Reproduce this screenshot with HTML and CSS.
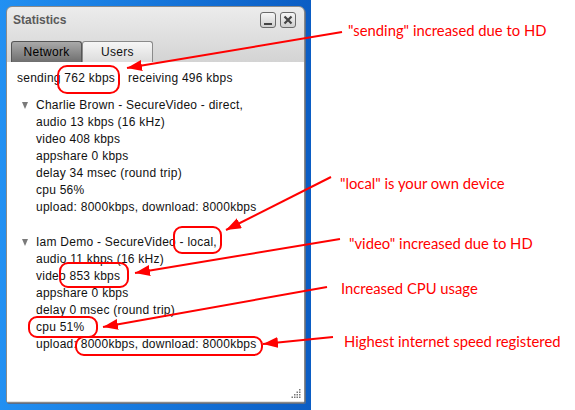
FILE: index.html
```html
<!DOCTYPE html>
<html>
<head>
<meta charset="utf-8">
<link rel="stylesheet" href="styles.css">
</head>
<body>
<div class="screen">
  <div class="desktop">
    <div class="window">
      <div class="titlebar">
        <span class="title">Statistics</span>
        <div class="controls">
          <span class="ctl"><svg width="14" height="14" viewBox="0 0 14 14"><rect x="3" y="10" width="8" height="2" fill="#444"/></svg></span>
          <span class="ctl"><svg width="14" height="14" viewBox="0 0 14 14"><path d="M3.5 3.5 L10.5 10.5 M10.5 3.5 L3.5 10.5" stroke="#444" stroke-width="2.2"/></svg></span>
        </div>
      </div>
      <div class="tabs">
        <div class="tab active">Network</div>
        <div class="tab">Users</div>
      </div>
      <div class="content">
        <div class="summary"><span>sending 762 kbps</span><span class="recv">receiving 496 kbps</span></div>
        <div class="peer">
          <div class="peer-head"><span class="tri"></span>Charlie Brown - SecureVideo - direct,</div>
          <div class="peer-lines">
            <div>audio 13 kbps (16 kHz)</div>
            <div>video 408 kbps</div>
            <div>appshare 0 kbps</div>
            <div>delay 34 msec (round trip)</div>
            <div>cpu 56%</div>
            <div>upload: 8000kbps, download: 8000kbps</div>
          </div>
        </div>
        <div class="peer second">
          <div class="peer-head"><span class="tri"></span>Iam Demo - SecureVideo - local,</div>
          <div class="peer-lines">
            <div>audio 11 kbps (16 kHz)</div>
            <div>video 853 kbps</div>
            <div>appshare 0 kbps</div>
            <div>delay 0 msec (round trip)</div>
            <div>cpu 51%</div>
            <div>upload: 8000kbps, download: 8000kbps</div>
          </div>
        </div>
        <svg class="grip" width="10" height="10" viewBox="0 0 10 10">
          <g fill="#777">
            <rect x="8" y="0" width="1.5" height="1.5"/>
            <rect x="5.5" y="2.5" width="1.5" height="1.5"/><rect x="8" y="2.5" width="1.5" height="1.5"/>
            <rect x="3" y="5" width="1.5" height="1.5"/><rect x="5.5" y="5" width="1.5" height="1.5"/><rect x="8" y="5" width="1.5" height="1.5"/>
            <rect x="0.5" y="7.5" width="1.5" height="1.5"/><rect x="3" y="7.5" width="1.5" height="1.5"/><rect x="5.5" y="7.5" width="1.5" height="1.5"/><rect x="8" y="7.5" width="1.5" height="1.5"/>
          </g>
        </svg>
      </div>
    </div>
  </div>

  <svg class="marks" width="575" height="410" viewBox="0 0 575 410">
    <defs>
      <marker id="ah" markerUnits="userSpaceOnUse" markerWidth="16" markerHeight="12" refX="15" refY="5.5" orient="auto">
        <path d="M0,0 L15,5.5 L0,11 z" fill="#f00"/>
      </marker>
    </defs>
    <g fill="none" stroke="#f00" stroke-width="2">
      <rect x="58" y="66" width="61" height="27" rx="9"/>
      <rect x="174" y="227" width="47" height="26" rx="8"/>
      <rect x="60" y="263" width="68" height="24" rx="8"/>
      <rect x="29" y="317" width="68" height="20" rx="8"/>
      <rect x="76" y="337" width="186" height="18" rx="8"/>
      <line x1="342" y1="32" x2="127" y2="68" marker-end="url(#ah)"/>
      <line x1="331" y1="177" x2="226" y2="230" marker-end="url(#ah)"/>
      <line x1="340" y1="239" x2="135" y2="273" marker-end="url(#ah)"/>
      <line x1="327" y1="287" x2="103" y2="327" marker-end="url(#ah)"/>
      <line x1="333" y1="337" x2="263" y2="344" marker-end="url(#ah)"/>
    </g>
  </svg>

  <div class="note n1">"sending" increased due to HD</div>
  <div class="note n2">"local" is your own device</div>
  <div class="note n3">"video" increased due to HD</div>
  <div class="note n4">Increased CPU usage</div>
  <div class="note n5">Highest internet speed registered</div>
</div>
</body>
</html>
```

FILE: styles.css
```css
* { box-sizing: border-box; }
html, body { margin: 0; padding: 0; background: #fff; }
.screen {
  position: relative;
  width: 575px;
  height: 410px;
  overflow: hidden;
  font-family: "Liberation Sans", Arial, sans-serif;
  font-size: 12px;
  color: #111;
}
.desktop {
  width: 311px;
  height: 410px;
  padding: 6px 6px 7px 6px;
  background: linear-gradient(to right, #2290f2, #0b5dc4);
}
.window {
  width: 299px;
  height: 397px;
  border: 1px solid #8a8a8a;
  border-radius: 6px 6px 2px 2px;
  background: linear-gradient(#ececec, #d3d3d3 56px);
  display: flex;
  flex-direction: column;
  overflow: hidden;
  box-shadow: 1px 1px 0 #5a6d88;
}
.titlebar {
  height: 34px;
  display: flex;
  align-items: flex-start;
  justify-content: space-between;
  padding: 5px 8px 0 6px;
}
.title {
  font-weight: bold;
  color: #5a5a5a;
  font-size: 12px;
  line-height: 16px;
}
.controls { display: flex; gap: 4px; }
.ctl {
  width: 16px;
  height: 16px;
  border: 1px solid #6a6a6a;
  border-radius: 3px;
  background: linear-gradient(#f6f6f6, #cfcfcf);
  display: flex;
  align-items: center;
  justify-content: center;
}
.tabs {
  display: flex;
  padding-left: 4px;
  height: 21px;
}
.tab {
  width: 71px;
  height: 21px;
  text-align: center;
  line-height: 20px;
  font-size: 12px;
  letter-spacing: 0.3px;
  color: #111;
  border: 1px solid #8a8a8a;
  border-bottom: none;
  border-radius: 3px 3px 0 0;
  background: linear-gradient(#f6f6f6, #dcdcdc);
}
.tab.active {
  background: linear-gradient(#a9a9a9, #6f6f6f);
  border-color: #555;
  color: #000;
}
.content {
  position: relative;
  flex: 1;
  background: #fff;
  padding: 8px 10px 0 10px;
  line-height: 17px;
  letter-spacing: 0.25px;
  border-bottom: 1px solid #e4e4e4;
}
.summary { display: flex; }
.recv { margin-left: 13px; }
.peer { margin-top: 10px; }
.peer.second { margin-top: 18px; }
.peer-head { display: flex; align-items: center; }
.tri {
  width: 0;
  height: 0;
  margin: 0 8px 0 5px;
  border-left: 3.5px solid transparent;
  border-right: 3.5px solid transparent;
  border-top: 7px solid #7a7a7a;
}
.peer-lines { padding-left: 19px; }
.grip { position: absolute; right: 3px; bottom: 2px; }

.marks { position: absolute; left: 0; top: 0; }
.note {
  position: absolute;
  font-family: Lato, "Open Sans", sans-serif;
  font-size: 14.8px;
  line-height: 18px;
  color: #f00;
  white-space: nowrap;
}
.n1 { left: 348px; top: 21px; }
.n2 { left: 340px; top: 174px; }
.n3 { left: 349px; top: 234px; }
.n4 { left: 341px; top: 279px; }
.n5 { left: 344px; top: 332px; }
```
